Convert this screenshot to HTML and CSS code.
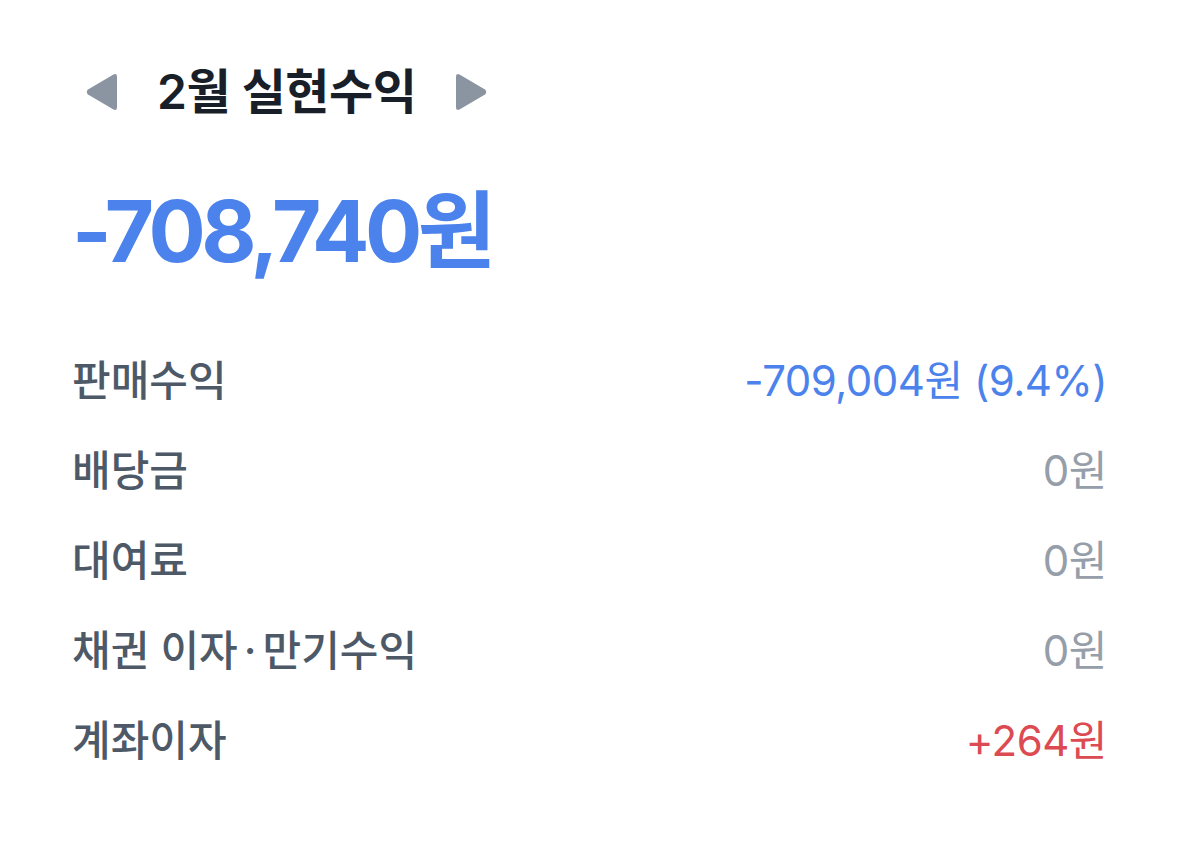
FILE: index.html
```html
<!DOCTYPE html>
<html lang="ko">
  <head>
    <meta charset="UTF-8" />
    <meta name="viewport" content="width=device-width, initial-scale=1.0" />
    <title>실현수익</title>
    <link rel="stylesheet" href="styles.css">
  </head>
  <body>
    <div class="container">
      <div class="month_nav">
        <button class="arrow" type="button" aria-label="이전 달">
          <svg width="33" height="38" viewBox="0 0 33 38"><path d="M28.5 1.5 Q32 0 32 4 L32 34 Q32 38 28.5 36.5 L3 21.5 Q0.5 19 3 16.5 Z" fill="#8b95a1"/></svg>
        </button>
        <h1>2월 실현수익</h1>
        <button class="arrow" type="button" aria-label="다음 달">
          <svg width="33" height="38" viewBox="0 0 33 38"><path d="M4.5 1.5 Q1 0 1 4 L1 34 Q1 38 4.5 36.5 L30 21.5 Q32.5 19 30 16.5 Z" fill="#8b95a1"/></svg>
        </button>
      </div>

      <div class="total minus">-708,740원</div>

      <ul class="detail_list">
        <li class="detail_row">
          <span class="label">판매수익</span>
          <span class="value minus">-709,004원 (9.4%)</span>
        </li>
        <li class="detail_row">
          <span class="label">배당금</span>
          <span class="value zero">0원</span>
        </li>
        <li class="detail_row">
          <span class="label">대여료</span>
          <span class="value zero">0원</span>
        </li>
        <li class="detail_row">
          <span class="label">채권 이자<span class="dot">·</span>만기수익</span>
          <span class="value zero">0원</span>
        </li>
        <li class="detail_row">
          <span class="label">계좌이자</span>
          <span class="value plus">+264원</span>
        </li>
      </ul>
    </div>
  </body>
</html>
```

FILE: styles.css
```css
body {
  margin: 0;
  background-color: #ffffff;
  font-family: "Inter", "Noto Sans CJK KR", sans-serif;
}
.container {
  padding: 52px 72px 0 72px;
}
.month_nav {
  display: flex;
  align-items: center;
  gap: 39px;
  height: 80px;
  padding-left: 13px;
}
.month_nav h1 {
  margin: 0;
  font-size: 48px;
  font-weight: 600;
  line-height: 1;
  color: #191f28;
  letter-spacing: -0.5px;
}
.arrow {
  display: flex;
  padding: 0;
  border: 0;
  background: none;
  cursor: pointer;
}
.total {
  margin-top: 57px;
  font-size: 85px;
  font-weight: 700;
  line-height: 1;
  letter-spacing: -4.5px;
}
.minus {
  color: #4b82ec;
}
.plus {
  color: #dc4a52;
}
.zero {
  color: #959ea9;
}
.detail_list {
  list-style: none;
  margin: 62px 0 0 0;
  padding: 0;
}
.detail_row {
  display: flex;
  justify-content: space-between;
  align-items: center;
  height: 90px;
  font-size: 42px;
  line-height: 1;
}
.label {
  color: #4e5968;
  font-weight: 500;
}
.label .dot {
  margin: 0 6px;
}
.value {
  font-weight: 400;
  letter-spacing: -0.5px;
}
```
